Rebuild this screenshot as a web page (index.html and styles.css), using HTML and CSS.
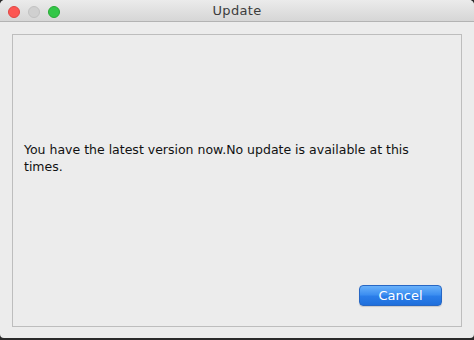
FILE: index.html
```html
<!DOCTYPE html>
<html>
<head>
<meta charset="utf-8">
<link rel="stylesheet" href="styles.css">
</head>
<body>
<div class="window">
  <div class="titlebar">
    <div class="lights">
      <span class="light red"></span>
      <span class="light gray"></span>
      <span class="light green"></span>
    </div>
    <div class="title">Update</div>
  </div>
  <div class="content">
    <div class="panel">
      <p class="message">You have the latest version now.No update is available at this times.</p>
      <div class="actions">
        <button class="btn">Cancel</button>
      </div>
    </div>
  </div>
</div>
</body>
</html>
```
FILE: styles.css
```css
html, body {
  margin: 0;
  padding: 0;
  background: #2a2a2a;
}
.window {
  width: 474px;
  height: 338px;
  background: #ececec;
  display: flex;
  flex-direction: column;
  border-radius: 5px 5px 4px 4px;
  overflow: hidden;
  font-family: "DejaVu Sans", "Liberation Sans", sans-serif;
}
.titlebar {
  height: 21px;
  border-bottom: 1px solid #b3b3b3;
  background: linear-gradient(#ebebeb, #d6d6d6);
  position: relative;
  display: flex;
  align-items: center;
  justify-content: center;
  flex: none;
}
.lights {
  position: absolute;
  left: 8px;
  top: 6px;
  display: flex;
  gap: 8px;
}
.light {
  width: 12px;
  height: 12px;
  border-radius: 50%;
  box-sizing: border-box;
}
.red { background: #fc5753; border: 1px solid #df4744; }
.gray { background: #d0d0d0; border: 1px solid #c2c2c2; }
.green { background: #33c748; border: 1px solid #27aa35; }
.title {
  font-size: 13px;
  color: #3c3c3c;
  letter-spacing: 0.3px;
}
.content {
  flex: 1;
  padding: 12px 12px 11px 12px;
  display: flex;
}
.panel {
  flex: 1;
  border: 1px solid #bdbdbd;
  display: flex;
  flex-direction: column;
  padding: 0 19px 20px 11px;
}
.message {
  margin: 106px 0 0 0;
  font-size: 12.5px;
  line-height: 17px;
  color: #111;
  width: 410px;
}
.actions {
  margin-top: auto;
  display: flex;
  justify-content: flex-end;
}
.btn {
  width: 83px;
  height: 21px;
  padding: 0;
  border: 1px solid #2767c4;
  border-radius: 4px;
  background: linear-gradient(#69b1fa 0%, #3d8ff1 45%, #2a7de9 55%, #1f6fdc 100%);
  color: #fff;
  font-family: "DejaVu Sans", "Liberation Sans", sans-serif;
  font-size: 13px;
  line-height: 19px;
  box-shadow: 0 1px 1px rgba(0,0,0,0.15);
}
```
